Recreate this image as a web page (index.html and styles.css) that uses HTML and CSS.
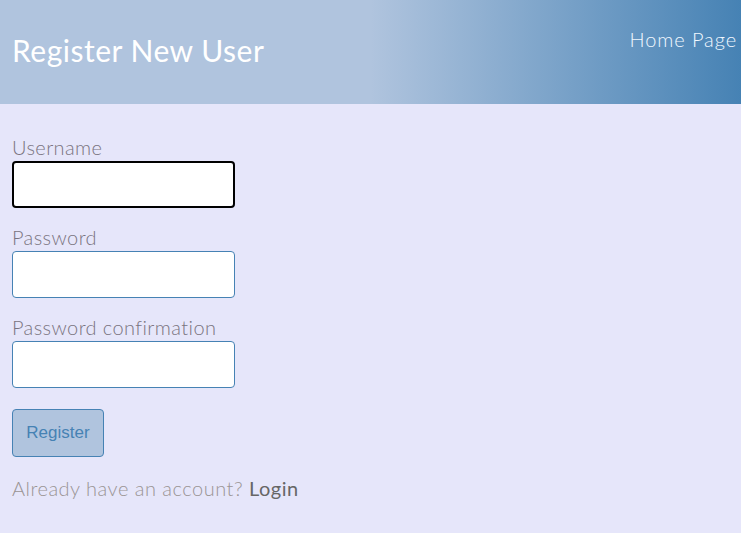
FILE: index.html
```html
<!DOCTYPE html>
<html>
<head>
<meta charset="utf-8">
<link rel="stylesheet" href="styles.css">
</head>
<body>
<header class="top">
  <h1 class="title">Register New User</h1>
  <a class="home" href="#">Home Page</a>
</header>
<main class="content">
  <form class="form">
    <div class="field">
      <label class="label">Username</label>
      <input class="input focused" type="text">
    </div>
    <div class="field">
      <label class="label">Password</label>
      <input class="input" type="password">
    </div>
    <div class="field">
      <label class="label">Password confirmation</label>
      <input class="input" type="password">
    </div>
    <button class="btn" type="button">Register</button>
  </form>
  <p class="note">Already have an account? <a class="login" href="#">Login</a></p>
</main>
</body>
</html>
```

FILE: styles.css
```css
html, body {
  margin: 0;
  padding: 0;
}
body {
  background: #e6e6fa;
  font-family: "Lato", "Open Sans", sans-serif;
  height: 533px;
}
.top {
  height: 104px;
  background: linear-gradient(to right, #b0c4de 0%, #b0c4de 50%, #4682b4 100%);
  display: flex;
  justify-content: space-between;
  align-items: flex-start;
  padding: 0 4px 0 12px;
}
.title {
  margin: 32px 0 0 0;
  font-weight: 400;
  font-size: 30px;
  line-height: 36px;
  color: #fff;
  letter-spacing: 0.5px;
}
.home {
  margin-top: 26px;
  font-weight: 300;
  font-size: 20px;
  line-height: 26px;
  color: #f0f8ff;
  text-decoration: none;
  letter-spacing: 0.9px;
}
.content {
  padding: 32px 12px 0 12px;
}
.form {
  display: flex;
  flex-direction: column;
  align-items: flex-start;
}
.field {
  display: flex;
  flex-direction: column;
  margin-bottom: 18px;
}
.label {
  font-weight: 300;
  font-size: 20px;
  line-height: 23px;
  color: #7a7480;
  letter-spacing: 0.4px;
  padding-bottom: 2px;
}
.input {
  box-sizing: border-box;
  width: 223px;
  height: 47px;
  margin: 0;
  border: 1px solid #4682b4;
  border-radius: 4px;
  background: #fff;
  outline: none;
}
.input.focused {
  border: 2px solid #000;
}
.btn {
  box-sizing: border-box;
  width: 92px;
  height: 48px;
  margin: 3px 0 0 0;
  padding: 0;
  background: #b0c4de;
  border: 1px solid #4682b4;
  border-radius: 4px;
  color: #4682b4;
  font-family: "Liberation Sans", Arial, sans-serif;
  font-size: 17px;
}
.note {
  margin: 18px 0 0 0;
  font-weight: 300;
  font-size: 20px;
  line-height: 26px;
  color: #9a9494;
  letter-spacing: 0.5px;
}
.login {
  color: #666;
  font-weight: 400;
  text-decoration: none;
}
```
